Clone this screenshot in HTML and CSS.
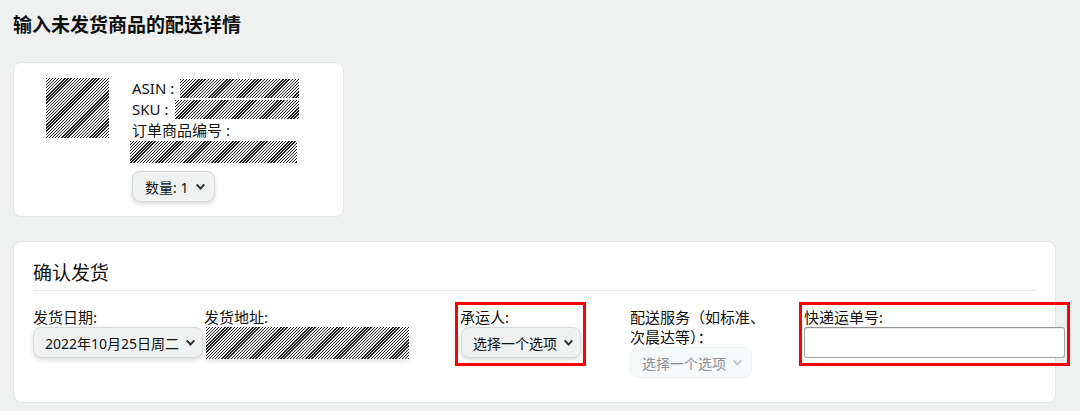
FILE: index.html
```html
<!DOCTYPE html>
<html lang="zh">
<head>
    <meta charset="UTF-8">
    <meta name="viewport" content="width=device-width, initial-scale=1.0">
    <title>确认发货</title>
    <link rel="stylesheet" href="styles.css">
</head>
<body>

<h1 class="page-title">输入未发货商品的配送详情</h1>

<div class="card item-card">
    <div class="item-image redacted"></div>
    <div class="item-info">
        <div class="info-line">ASIN : <span class="redacted asin-value"></span></div>
        <div class="info-line">SKU : <span class="redacted sku-value"></span></div>
        <div class="info-line">订单商品编号 :</div>
        <div class="redacted order-value"></div>
        <button class="dropdown qty-btn">数量: 1
            <svg class="chevron" viewBox="0 0 10 10"><polyline points="1.5,3 5,6.8 8.5,3"/></svg>
        </button>
    </div>
</div>

<div class="card ship-card">
    <h2 class="ship-title">确认发货</h2>
    <div class="ship-row">
        <div class="field col-date">
            <label>发货日期:</label>
            <button class="dropdown">2022年10月25日周二
                <svg class="chevron" viewBox="0 0 10 10"><polyline points="1.5,3 5,6.8 8.5,3"/></svg>
            </button>
        </div>
        <div class="field col-address">
            <label>发货地址:</label>
            <div class="redacted address-value"></div>
        </div>
        <div class="field col-carrier marked">
            <label>承运人:</label>
            <button class="dropdown">选择一个选项
                <svg class="chevron" viewBox="0 0 10 10"><polyline points="1.5,3 5,6.8 8.5,3"/></svg>
            </button>
        </div>
        <div class="field col-service">
            <label>配送服务（如标准、次晨达等）：</label>
            <button class="dropdown disabled" disabled>选择一个选项
                <svg class="chevron" viewBox="0 0 10 10"><polyline points="1.5,3 5,6.8 8.5,3"/></svg>
            </button>
        </div>
        <div class="field col-tracking marked">
            <label>快递运单号:</label>
            <input type="text" class="text-input">
        </div>
    </div>
</div>

</body>
</html>
```

FILE: styles.css
```css
body {
    font-family: "Noto Sans", "Noto Sans CJK SC", sans-serif;
    background-color: #eff1f1;
    color: #0f1111;
    margin: 0;
    padding: 0 13px;
    font-size: 15px;
}

.page-title {
    font-size: 19px;
    font-weight: bold;
    margin: 0;
    padding-top: 11px;
    line-height: 28px;
    height: 51px;
}

.card {
    background: #fff;
    border: 1px solid #e3e6e6;
    border-radius: 8px;
    box-sizing: border-box;
}

.redacted {
    display: inline-block;
    background: repeating-linear-gradient(135deg, #1e1e1e 0 1px, #f4f4f4 1px 2.2px);
}

.item-card {
    width: 331px;
    height: 155px;
    display: flex;
    padding: 15px 0 0 32px;
}

.item-image {
    width: 63px;
    height: 60px;
    margin-right: 23px;
}

.item-info {
    line-height: 21px;
    width: 167px;
}

.info-line {
    display: flex;
    align-items: center;
}

.asin-value {
    width: 119px;
    height: 19px;
    margin-left: auto;
}

.sku-value {
    width: 124px;
    height: 19px;
    margin-left: auto;
}

.order-value {
    display: block;
    width: 167px;
    height: 22px;
    margin-left: -2px;
}

.dropdown {
    display: inline-flex;
    align-items: center;
    justify-content: space-between;
    font-family: inherit;
    font-size: 14px;
    color: #0f1111;
    background: #f0f2f2;
    border: 1px solid #d5d9d9;
    border-radius: 8px;
    box-shadow: 0 2px 5px rgba(15, 17, 17, 0.15);
    height: 31px;
    padding: 0 8px 0 11px;
    box-sizing: border-box;
    cursor: pointer;
    white-space: nowrap;
}

.chevron {
    width: 11px;
    height: 11px;
    margin-left: 6px;
    flex-shrink: 0;
    fill: none;
    stroke: #333;
    stroke-width: 1.8;
}

.qty-btn {
    margin-top: 8px;
    width: 83px;
    padding: 0 8px 0 12px;
}

.ship-card {
    width: 1043px;
    height: 162px;
    margin-top: 24px;
    padding: 16px 0 0 19px;
}

.ship-title {
    font-size: 19px;
    font-weight: normal;
    margin: 0;
    line-height: 30px;
    width: 1003px;
    border-bottom: 1px solid #e7e7e7;
    padding-bottom: 2px;
}

.ship-row {
    display: flex;
    align-items: flex-start;
    margin-top: 16px;
}

.field {
    flex-shrink: 0;
}

.field label {
    display: block;
    line-height: 20px;
}

.col-date {
    width: 171px;
}

.col-date .dropdown {
    width: 170px;
}

.col-address {
    width: 205px;
}

.address-value {
    width: 203px;
    height: 32px;
    margin-left: 2px;
    box-shadow: 0 2px 5px rgba(15, 17, 17, 0.15);
}

.marked {
    outline: 3px solid #f00;
    outline-offset: 2px;
}

.col-carrier {
    width: 121px;
    margin-left: 51px;
    padding-bottom: 3px;
}

.col-carrier .dropdown {
    margin-left: 1px;
    width: 120px;
}

.col-service {
    width: 150px;
    margin-left: 49px;
}

.col-service label {
    width: 140px;
}

.dropdown.disabled {
    background: #f7fafa;
    border-color: #f0f3f3;
    box-shadow: none;
    color: #8d9096;
    width: 122px;
    cursor: default;
}

.dropdown.disabled .chevron {
    stroke: #c4c6c6;
}

.col-tracking {
    width: 261px;
    margin-left: 24px;
    padding-bottom: 3px;
}

.text-input {
    display: block;
    width: 261px;
    height: 31px;
    box-sizing: border-box;
    border: 1px solid #a6a6a6;
    border-top-color: #949494;
    border-radius: 3px;
    box-shadow: inset 0 1px 0 rgba(0, 0, 0, 0.07);
}
```
